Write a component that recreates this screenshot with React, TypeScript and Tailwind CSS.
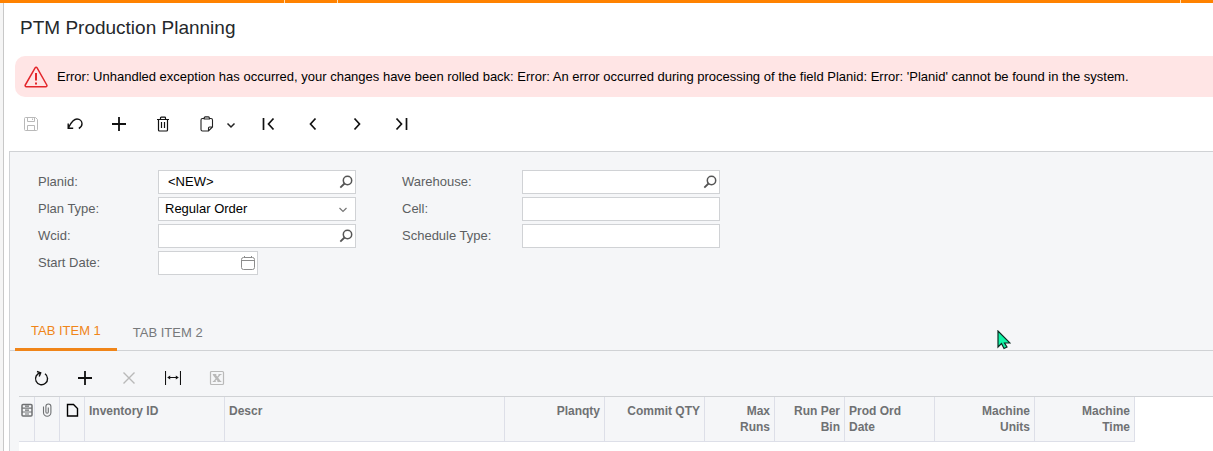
import type { ReactNode } from "react";

const icons: { [key: string]: ReactNode } = {
  save: (
    <path d="M1.5 2.5a1 1 0 0 1 1-1h10l2 2v10a1 1 0 0 1-1 1h-11a1 1 0 0 1-1-1zM4.5 1.5v4h7v-4M9.5 2.5v1.5M4.5 14.5v-5h7v5" />
  ),
  undo: (
    <path d="M1.2 7.500v4.700h5M1.500 11.800C3.500 8 5.500 3 10 3c3 0 5 2.200 5 4.800 0 2.200-1.200 3.700-3.200 4.700" strokeWidth="1.400" />
  ),
  add: <path d="M8 1v14M1 8h14" strokeWidth="1.800" />,
  remove: (
    <path d="M2 3.500h12M5.500 3.500v-1.500a.8.8 0 0 1 .8-.8h3.400a.8.8 0 0 1 .8.8v1.500M3.500 3.500v10.500a1 1 0 0 0 1 1h7a1 1 0 0 0 1-1V3.500M6.500 6v6M9.500 6v6" strokeWidth="1.2" />
  ),
  clipboard: (
    <path d="M5 2.500H3.500a1.500 1.500 0 0 0-1.500 1.500v9.500a1.500 1.500 0 0 0 1.500 1.500H9.500l4-4V4A1.500 1.500 0 0 0 12 2.500h-1.500M5.200 3V1.900a1 1 0 0 1 1-1h3.200a1 1 0 0 1 1 1v1.100zM9.500 15v-3a1 1 0 0 1 1-1h3" strokeWidth="1.100" />
  ),
  first: <path d="M2.500 2v12M12.500 2.500L7.500 8l5 5.500" strokeWidth="1.700" />,
  prev: <path d="M10.500 2.500L5.500 8l5 5.500" strokeWidth="1.700" />,
  next: <path d="M5.500 2.500L10.500 8l-5 5.500" strokeWidth="1.700" />,
  last: <path d="M3.500 2.500L8.500 8l-5 5.500M13.500 2v12" strokeWidth="1.700" />,
  down: <path d="M4.500 7.500L8 11l3.500-3.500" strokeWidth="1.500" />,
  thinDown: <path d="M4.500 7L8 10.500l3.500-3.500" strokeWidth="1.200" />,
  refresh: (
    <path d="M7.500 2.800a6 6 0 1 0 4.500 1M4 1.500l3.700 1.300-1.500 3.700" strokeWidth="1.400" />
  ),
  close: <path d="M2.500 2.500l11 11M13.500 2.500l-11 11" strokeWidth="1.400" />,
  fit: (
    <>
      <path d="M.5 1v14M15.500 1v14M3 7.500h10" strokeWidth="1.100" />
      <path d="M2.200 7.500l3-2v4zM13.800 7.500l-3-2v4z" fill="currentColor" stroke="none" />
    </>
  ),
  excel: (
    <>
      <rect x="1.500" y="1.500" width="13" height="13" rx="1" strokeWidth="1.200" />
      <path d="M5 4.500l5.500 7" strokeWidth="2.600" />
      <path d="M11 4.500l-6 7M3.800 4.500h3.500M9.500 4.500h3M3.800 11.500h3M8.500 11.500h3.800" strokeWidth="1.200" />
    </>
  ),
  search: (
    <>
      <circle cx="9.500" cy="6.500" r="4.200" strokeWidth="1.500" />
      <path d="M6.500 9.500L2.300 13.700" strokeWidth="1.800" />
    </>
  ),
  calendar: (
    <path d="M3.500 2.500h9a2 2 0 0 1 2 2v8a2 2 0 0 1-2 2h-9a2 2 0 0 1-2-2v-8a2 2 0 0 1 2-2zM1.500 5.500h13M4.500 1v2M11.500 1v2" />
  ),
  files: (
    <>
      <rect x="3" y="2.500" width="10" height="11.500" rx="1" strokeWidth="1.500" />
      <path d="M3 6.200h10M3 10h10M6 4.200h4M6 8.200h4M6 12h4" strokeWidth="1.200" />
    </>
  ),
  clip: (
    <path d="M4.500 4.500v6a3.700 3.700 0 0 0 7.400 0V4.500a2.500 2.500 0 0 0-5 0V10a1.200 1.200 0 0 0 2.400 0V5.500" strokeWidth="1.100" />
  ),
  note: <path d="M3.500 2.500H9.500L13.500 6.500v7.500H3.500z" strokeWidth="1.400" />,
};

const Icon = ({ name }: { name: string }) => (
  <svg viewBox="0 0 16 16" fill="none" stroke="currentColor" className="size-4 shrink-0" aria-hidden="true">
    {icons[name]}
  </svg>
);

const ToolButton = ({
  icon,
  label,
  disabled = false,
}: {
  icon: string;
  label: string;
  disabled?: boolean;
}) => (
  <button
    type="button"
    aria-label={label}
    disabled={disabled}
    className="flex h-8 w-11 items-center justify-center text-[#111111] disabled:text-[#b9b9b9]"
  >
    <Icon name={icon} />
  </button>
);

const Field = ({
  id,
  label,
  value = "",
  icon,
  short = false,
}: {
  id: string;
  label: string;
  value?: string;
  icon?: string;
  short?: boolean;
}) => (
  <div className="flex items-center">
    <label htmlFor={id} className="w-[120px]">
      {label}
    </label>
    <div className={`flex h-6 items-center border border-[#d0d2d5] bg-white pr-px ${short ? "w-[100px]" : "w-[198px]"}`}>
      <input id={id} defaultValue={value} className="w-full min-w-0 pl-[9px] text-black outline-none" />
      {icon && (
        <button type="button" aria-label={`${label} lookup`} className={icon === "calendar" ? "text-[#8c8c8c]" : "text-[#555555]"}>
          <Icon name={icon} />
        </button>
      )}
    </div>
  </div>
);

const columns = [
  { label: "Files", icon: "files", width: "w-4" },
  { label: "Attachments", icon: "clip", width: "w-[25px]" },
  { label: "Notes", icon: "note", width: "w-[25px]" },
  { label: "Inventory ID", width: "w-[140px]" },
  { label: "Descr", width: "w-[280px]" },
  { label: "Planqty", width: "w-[100px]", right: true },
  { label: "Commit QTY", width: "w-[100px]", right: true },
  { label: "Max\nRuns", width: "w-[70px]", right: true },
  { label: "Run Per\nBin", width: "w-[70px]", right: true },
  { label: "Prod Ord\nDate", width: "w-[90px]" },
  { label: "Machine\nUnits", width: "w-[100px]", right: true },
  { label: "Machine\nTime", width: "w-[100px]", right: true },
];

const Grid = () => (
  <div className="ml-[9px] grow border-t border-[#d0d2d5] bg-white">
    <table className="w-[1116px] table-fixed border-separate border-spacing-0 text-xs leading-4 text-[#6f7173]">
      <thead>
        <tr className="h-[45px]">
          {columns.map((col) => (
            <th
              key={col.label}
              scope="col"
              aria-label={col.icon ? col.label : undefined}
              className={`border-r border-b border-[#dddfe8] bg-[#f5f6f8] align-top font-bold whitespace-pre-line ${col.width} ${
                col.icon ? "pt-[5px]" : "px-1 pt-[6px]"
              } ${col.right ? "text-right" : "text-left"}`}
            >
              {col.icon ? (
                <span className={`flex justify-center ${col.icon === "note" ? "text-black" : ""}`}>
                  <Icon name={col.icon} />
                </span>
              ) : (
                col.label
              )}
            </th>
          ))}
        </tr>
      </thead>
    </table>
  </div>
);

export default function App() {
  return (
    <div className="relative flex min-h-screen flex-col overflow-hidden bg-white font-['Liberation_Sans',Arial,sans-serif] text-[13px] leading-4">
      <div className="flex h-[3px] gap-px bg-[#ffe0b8]">
        <div className="w-[284px] bg-[#ff8200]" />
        <div className="w-[52px] bg-[#ff8200]" />
        <div className="grow bg-[#ff8200]" />
        <div className="w-8 bg-[#ff8200]" />
      </div>
      <div className="flex grow">
        <div className="w-1 shrink-0 border-r border-[#c8c8c8] bg-[#f5f5f5]" />
        <main className="flex min-w-0 grow flex-col">
          <h1 className="px-4 pt-[13px] pb-4 text-[19px] leading-6 text-[#25282b]">PTM Production Planning</h1>
          <div role="alert" className="ml-[11px] flex h-[41px] items-center gap-[9px] rounded-l-[10px] bg-[#ffe5e5] pl-[9px] whitespace-nowrap text-black">
            <svg viewBox="0 0 24 22" fill="none" stroke="#e3262b" strokeWidth="1.500" className="h-[22px] w-6 shrink-0" aria-hidden="true">
              <path d="M11.100 1.800a1.200 1.200 0 0 1 2 0l9.700 17.200a1.200 1.200 0 0 1-1 1.800H2.300a1.200 1.200 0 0 1-1-1.800z" />
              <path d="M12 7v7.500M12 16.500v2" strokeWidth="2" />
            </svg>
            <p>
              Error: Unhandled exception has occurred, your changes have been rolled back: Error: An error occurred during
              processing of the field Planid: Error: 'Planid' cannot be found in the system.
            </p>
          </div>
          <div className="flex px-[5px] py-[11px]">
            <ToolButton icon="save" label="Save" disabled />
            <ToolButton icon="undo" label="Undo" />
            <ToolButton icon="add" label="Add" />
            <ToolButton icon="remove" label="Delete" />
            <button type="button" aria-label="Copy and paste" className="flex h-8 w-[62px] items-center gap-2 pl-[14px] text-[#222222]">
              <Icon name="clipboard" />
              <Icon name="down" />
            </button>
            <ToolButton icon="first" label="First" />
            <ToolButton icon="prev" label="Previous" />
            <ToolButton icon="next" label="Next" />
            <ToolButton icon="last" label="Last" />
          </div>
          <section className="ml-[5px] flex grow flex-col border-t border-l border-[#d0d2d5] bg-[#f5f6f8]">
            <form className="flex gap-[46px] px-7 pt-[18px] pb-9 text-[#5c5f62]">
              <div className="flex flex-col gap-[3px]">
                <Field id="planid" label="Planid:" value="<NEW>" icon="search" />
                <div className="flex items-center">
                  <label htmlFor="plan-type" className="w-[120px]">
                    Plan Type:
                  </label>
                  <div className="relative h-6 w-[198px] border border-[#d0d2d5] bg-white">
                    <select id="plan-type" className="h-full w-full appearance-none pl-[6px] text-black outline-none">
                      <option>Regular Order</option>
                    </select>
                    <span className="pointer-events-none absolute top-[3px] right-1 text-[#777777]">
                      <Icon name="thinDown" />
                    </span>
                  </div>
                </div>
                <Field id="wcid" label="Wcid:" icon="search" />
                <Field id="start-date" label="Start Date:" icon="calendar" short />
              </div>
              <div className="flex flex-col gap-[3px]">
                <Field id="warehouse" label="Warehouse:" icon="search" />
                <Field id="cell" label="Cell:" />
                <Field id="schedule-type" label="Schedule Type:" />
              </div>
            </form>
            <div role="tablist" className="flex h-10 border-b border-[#d0d2d5] pl-[5px]">
              <button type="button" role="tab" aria-selected="true" className="h-10 border-b-3 border-[#f08519] px-4 pt-[3px] text-[#f08519]">
                TAB ITEM 1
              </button>
              <button type="button" role="tab" aria-selected="false" className="h-10 px-4 pt-[3px] text-[#77797b]">
                TAB ITEM 2
              </button>
            </div>
            <div className="flex pt-[11px] pb-[2px] pl-[9px]">
              <ToolButton icon="refresh" label="Refresh" />
              <ToolButton icon="add" label="Add row" />
              <ToolButton icon="close" label="Delete row" disabled />
              <ToolButton icon="fit" label="Fit to screen" />
              <ToolButton icon="excel" label="Export to Excel" disabled />
            </div>
            <Grid />
          </section>
        </main>
      </div>
      <svg viewBox="0 0 14 20" className="pointer-events-none absolute top-[330px] left-[997px] h-5 w-[14px]" aria-hidden="true">
        <path d="M1 1v16l3.500-3.500L7 18.500l3-1.500-2.500-4H13z" fill="#12f5a8" stroke="#0b2b22" strokeWidth="1.200" />
      </svg>
    </div>
  );
}
